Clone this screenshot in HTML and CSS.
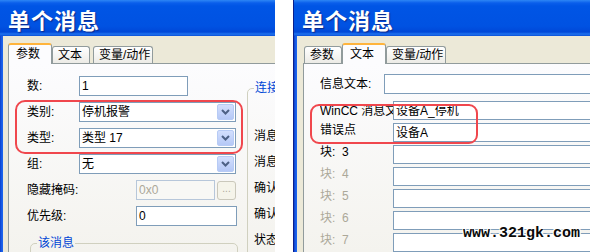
FILE: index.html
```html
<!DOCTYPE html>
<html lang="zh-CN">
<head>
<meta charset="utf-8">
<title>单个消息</title>
<link rel="stylesheet" href="styles.css">
</head>
<body>
<div class="stage">
  <section class="win win-left">
    <div class="titlebar">单个消息</div>
    <div class="body">
      <div class="tabs">
        <div class="tab active">参数</div>
        <div class="tab">文本</div>
        <div class="tab wide">变量/动作</div>
      </div>
      <div class="panel">
        <div class="main">
          <div class="row"><span class="lbl">数:</span><div class="field w-num"><span class="val">1</span></div></div>
          <div class="row"><span class="lbl">类别:</span><div class="field combo w-combo"><span class="val">停机报警</span><span class="drop"><svg width="9" height="6" viewBox="0 0 9 6"><polyline points="1,1 4.5,4.5 8,1" fill="none" stroke="#4D6185" stroke-width="2"/></svg></span></div></div>
          <div class="row"><span class="lbl">类型:</span><div class="field combo w-combo"><span class="val">类型 17</span><span class="drop"><svg width="9" height="6" viewBox="0 0 9 6"><polyline points="1,1 4.5,4.5 8,1" fill="none" stroke="#4D6185" stroke-width="2"/></svg></span></div></div>
          <div class="row"><span class="lbl">组:</span><div class="field combo w-combo"><span class="val">无</span><span class="drop"><svg width="9" height="6" viewBox="0 0 9 6"><polyline points="1,1 4.5,4.5 8,1" fill="none" stroke="#4D6185" stroke-width="2"/></svg></span></div></div>
          <div class="row"><span class="lbl lbl-wide">隐藏掩码:</span><div class="field disabled w-mask"><span class="val">0x0</span></div><span class="dots">...</span></div>
          <div class="row"><span class="lbl lbl-wide">优先级:</span><div class="field w-prio"><span class="val">0</span></div></div>
          <fieldset class="group g-msg"><legend>该消息</legend></fieldset>
        </div>
        <div class="side">
          <fieldset class="group g-conn"><legend>连接</legend>
            <div class="srow">消息</div>
            <div class="srow">消息</div>
            <div class="srow">确认</div>
            <div class="srow">确认</div>
            <div class="srow">状态</div>
          </fieldset>
        </div>
      </div>
    </div>
  </section>

  <section class="win win-right">
    <div class="titlebar">单个消息</div>
    <div class="body">
      <div class="tabs">
        <div class="tab">参数</div>
        <div class="tab active">文本</div>
        <div class="tab wide">变量/动作</div>
      </div>
      <div class="panel">
        <div class="rmain">
          <div class="rrow first"><span class="rlbl short">信息文本:</span><div class="rfield"></div></div>
          <div class="rrow second"><span class="rlbl">WinCC 消息文</span><div class="rfield">设备A_停机</div></div>
          <div class="rrow lift"><span class="rlbl">错误点</span><div class="rfield">设备A</div></div>
          <div class="rrow lift"><span class="rlbl">块:&nbsp; 3</span><div class="rfield"></div></div>
          <div class="rrow lift"><span class="rlbl dim">块:&nbsp; 4</span><div class="rfield"></div></div>
          <div class="rrow lift"><span class="rlbl dim">块:&nbsp; 5</span><div class="rfield"></div></div>
          <div class="rrow lift"><span class="rlbl dim">块:&nbsp; 6</span><div class="rfield"></div></div>
          <div class="rrow lift"><span class="rlbl dim">块:&nbsp; 7</span><div class="rfield"></div></div>
        </div>
      </div>
    </div>
  </section>
</div>

<div class="mark mark-left"></div>
<div class="mark mark-right"></div>
<div class="watermark">www.321gk.com</div>
</body>
</html>
```

FILE: styles.css
```css
* { box-sizing: border-box; }
html, body { margin: 0; padding: 0; }
body {
  width: 590px;
  height: 252px;
  overflow: hidden;
  position: relative;
  background: #fff;
  font-family: "Liberation Sans", "Noto Sans CJK SC", sans-serif;
  font-size: 12px;
  line-height: 14px;
  color: #000;
}
.stage { display: flex; gap: 18px; height: 252px; }

.win {
  height: 252px;
  display: flex;
  flex-direction: column;
  overflow: hidden;
  background: linear-gradient(to right, #0B3FCB, #1B63EC 2px, #2A6FF0);
}
.win-left { width: 275px; }
.win-right { width: 297px; border-left: 1px solid #0A1F8C; }

.titlebar {
  flex: none;
  height: 36px;
  padding-left: 8px;
  background: linear-gradient(#2D86F5 0px, #0A5EEB 3px, #0055E5 6px, #0052E2 26px, #0048D8 32px, #1F72EE 34px, #0A50D8 36px);
  color: #fff;
  font-family: "Noto Sans CJK SC", sans-serif;
  font-weight: 700;
  font-size: 22px;
  letter-spacing: 1px;
  line-height: 38px;
  text-shadow: 1px 1px 1px #0D2C8C;
  white-space: nowrap;
}

.body {
  flex: 1;
  min-height: 0;
  margin-left: 3px;
  padding-left: 5px;
  background: #ECE9D8;
  display: flex;
  flex-direction: column;
}
.win-right .body { padding-left: 6px; }

.tabs {
  flex: none;
  display: flex;
  align-items: flex-end;
  height: 20px;
  margin-top: 7px;
  padding-left: 3px;
  position: relative;
  z-index: 2;
}
.win-right .tabs { padding-left: 1px; }

.tab {
  flex: none;
  width: 38px;
  height: 17px;
  margin-right: 3px;
  padding-left: 5px;
  border: 1px solid #919B9C;
  border-bottom: 0;
  border-radius: 3px 3px 0 0;
  background: linear-gradient(#FFFFFF, #ECEBE6);
  display: flex;
  align-items: center;
  white-space: nowrap;
}
.tab.wide { width: 60px; }
.tab.active {
  width: 44px;
  height: 21px;
  margin: 0 0 -1px -3px;
  padding-left: 7px;
  padding-bottom: 2px;
  border-top: 2px solid #FFB43C;
  background: #FCFCFE;
}

.panel {
  flex: 1;
  min-height: 0;
  display: flex;
  overflow: hidden;
  border-top: 1px solid #919B9C;
  border-left: 1px solid #919B9C;
  background: linear-gradient(#FCFCFE, #F4F3EE);
}

/* left panel */
.main { flex: none; width: 238px; padding: 9px 0 0 18px; }
.row { display: flex; align-items: center; height: 26px; }
.lbl { flex: none; width: 52px; white-space: nowrap; }
.lbl-wide { width: 109px; }

.field {
  flex: none;
  height: 20px;
  padding-left: 2px;
  border: 1px solid #7F9DB9;
  background: #fff;
  display: flex;
  align-items: center;
  white-space: nowrap;
  overflow: hidden;
}
.field .val { flex: 1; }
.w-num { width: 109px; }
.w-combo { width: 157px; padding-right: 1px; }
.w-mask { width: 79px; }
.w-prio { width: 101px; }
.field.disabled { border-color: #B7C7DA; background: #F8F8F5; color: #ACA899; }

.drop {
  flex: none;
  width: 17px;
  height: 16px;
  border: 1px solid #B7CBF5;
  border-radius: 2px;
  background: linear-gradient(#D3DFFD, #B5C8F6);
  display: flex;
  align-items: center;
  justify-content: center;
}
.drop svg { display: block; }

.dots {
  flex: none;
  width: 19px;
  height: 19px;
  margin-left: 2px;
  border: 1px solid #CAC8BB;
  border-radius: 3px;
  background: #F5F4EA;
  color: #ACA899;
  font-size: 10px;
  line-height: 14px;
  display: flex;
  justify-content: center;
}

.group {
  margin: 0;
  padding: 0 0 0 6px;
  border: 1px solid #D0D0BF;
  border-radius: 5px;
  min-width: 0;
}
.group legend {
  padding: 0 1px;
  color: #0046D5;
  line-height: 14px;
}
.g-msg { margin: 7px 0 0 3px; width: 208px; height: 40px; }

.side { flex: none; width: 80px; padding-top: 17px; }
.g-conn { width: 80px; height: 200px; padding-left: 6px; }
.srow { display: flex; align-items: center; height: 26px; white-space: nowrap; }
.srow:first-of-type { margin-top: 28px; }

/* right panel */
.rmain { padding: 10px 0 0 16px; }
.rrow { display: flex; align-items: center; height: 19px; margin-top: 3px; }
.rrow.first { height: 20px; margin-top: 0; }
.rrow.second { margin-top: 7px; }
.rlbl { flex: none; width: 73px; white-space: nowrap; overflow: hidden; }
.rlbl.short { width: 64px; }
.rrow.lift .rlbl { margin-top: -5px; }
.dim { color: #ACA899; }
.rfield {
  flex: none;
  width: 230px;
  height: 19px;
  padding-left: 2px;
  border: 1px solid #7F9DB9;
  background: #fff;
  display: flex;
  align-items: center;
  white-space: nowrap;
}
.rrow.first .rfield { height: 20px; }

/* annotations */
.mark {
  position: absolute;
  border: 2px solid #F0474D;
  border-radius: 10px;
}
.mark-left { left: 15px; top: 100px; width: 228px; height: 54px; }
.mark-right { left: 310px; top: 104px; width: 168px; height: 40px; border-radius: 9px; }

.watermark {
  position: absolute;
  left: 463px;
  top: 226px;
  font-family: "Liberation Mono", monospace;
  font-weight: 700;
  font-size: 15px;
  line-height: 16px;
  color: #0A0A0A;
  text-shadow: 1px 1px 0 #fff, -1px -1px 0 #fff, 1px -1px 0 #fff, -1px 1px 0 #fff;
  white-space: nowrap;
}
```
